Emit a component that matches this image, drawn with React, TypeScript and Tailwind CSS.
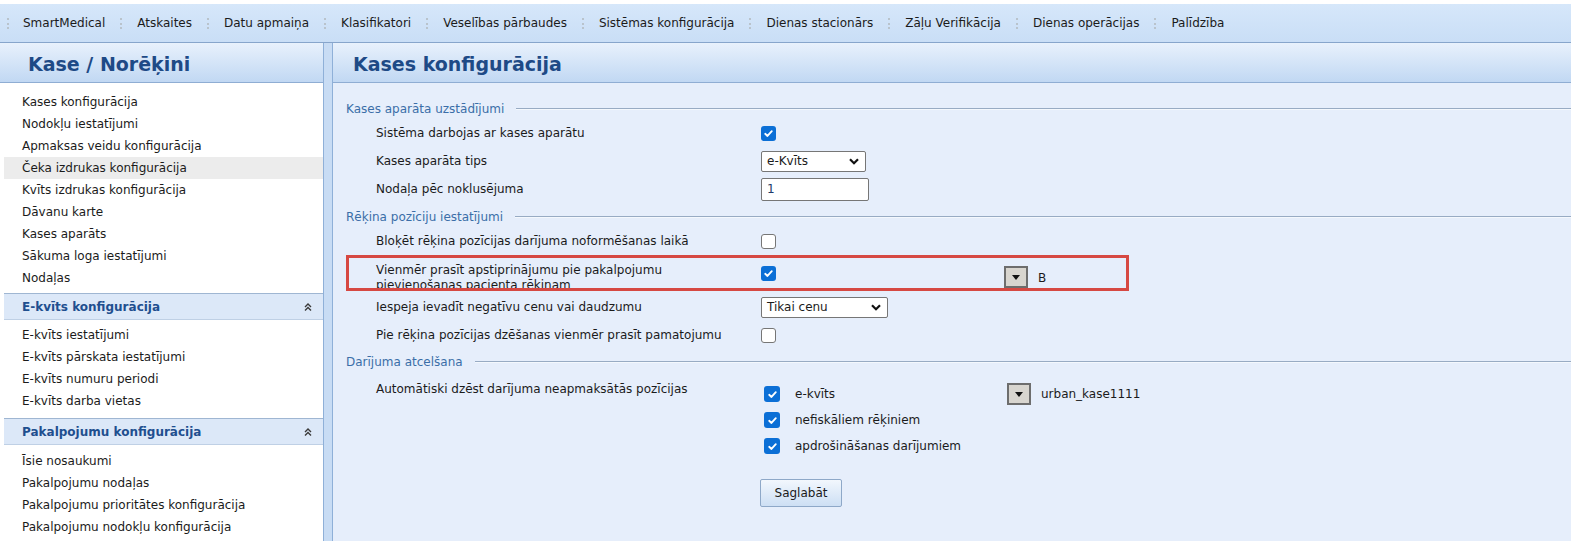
import React from 'react';

const navItems = [
  'SmartMedical',
  'Atskaites',
  'Datu apmaiņa',
  'Klasifikatori',
  'Veselības pārbaudes',
  'Sistēmas konfigurācija',
  'Dienas stacionārs',
  'Zāļu Verifikācija',
  'Dienas operācijas',
  'Palīdzība',
];

const kaseItems = [
  'Kases konfigurācija',
  'Nodokļu iestatījumi',
  'Apmaksas veidu konfigurācija',
  'Čeka izdrukas konfigurācija',
  'Kvīts izdrukas konfigurācija',
  'Dāvanu karte',
  'Kases aparāts',
  'Sākuma loga iestatījumi',
  'Nodaļas',
];

const ekvitsItems = ['E-kvīts iestatījumi', 'E-kvīts pārskata iestatījumi', 'E-kvīts numuru periodi', 'E-kvīts darba vietas'];

const pakalpItems = [
  'Īsie nosaukumi',
  'Pakalpojumu nodaļas',
  'Pakalpojumu prioritātes konfigurācija',
  'Pakalpojumu nodokļu konfigurācija',
];

function Separator() {
  return <span className="mx-[15px] h-[11px] border-l-[2px] border-dotted border-[#b9c3cc]" />;
}

function Checkbox({ checked, size = 'h-[15px] w-[15px]' }: { checked: boolean; size?: string }) {
  if (!checked) {
    return <span className={`block ${size} rounded-[3px] border border-[#767676] bg-white`} />;
  }
  return (
    <span className={`flex ${size} items-center justify-center rounded-[3px] bg-[#0b6fd6]`}>
      <svg viewBox="0 0 12 12" className="h-[11px] w-[11px]">
        <path d="M2.4 6.3 L4.9 8.7 L9.6 3.4" fill="none" stroke="white" strokeWidth="2" strokeLinecap="round" strokeLinejoin="round" />
      </svg>
    </span>
  );
}

function Select({ value, width }: { value: string; width: string }) {
  return (
    <div className={`flex h-[21px] ${width} items-center justify-between rounded-[2px] border border-[#767676] bg-white pl-[5px] pr-[6px]`}>
      <span>{value}</span>
      <svg viewBox="0 0 10 7" className="h-[7px] w-[10px]">
        <path d="M1 1.2 L5 5.2 L9 1.2" fill="none" stroke="#111" strokeWidth="2.2" />
      </svg>
    </div>
  );
}

function DropButton() {
  return (
    <span className="flex h-[22px] w-[24px] items-center justify-center border-2 border-[#6d6d6d] bg-[#d8d5cf]">
      <svg viewBox="0 0 8 5" className="h-[5px] w-[8px]">
        <path d="M0 0 H8 L4 5 Z" fill="#111" />
      </svg>
    </span>
  );
}

function DoubleUp() {
  return (
    <svg viewBox="0 0 10 10" className="h-[10px] w-[10px]">
      <path d="M2 5 L5 2 L8 5 M2 8.5 L5 5.5 L8 8.5" fill="none" stroke="#3a3a3a" strokeWidth="1.4" />
    </svg>
  );
}

function Legend({ title }: { title: string }) {
  return (
    <div className="flex h-[20px] items-center">
      <span className="text-[#3b6ea8]">{title}</span>
      <div className="ml-[12px] flex-1 border-t border-b border-t-[#98abc3] border-b-[#f4f8fd]" />
    </div>
  );
}

function Row({ label, control, extra, h = 'h-[28px]' }: { label: string; control?: React.ReactNode; extra?: React.ReactNode; h?: string }) {
  return (
    <div className={`flex ${h} items-center`}>
      <div className="w-[415px] pl-[30px]">{label}</div>
      <div className="w-[243px]">{control}</div>
      <div>{extra}</div>
    </div>
  );
}

function SectionHeader({ title }: { title: string }) {
  return (
    <div className="flex h-[27px] items-center justify-between border-t border-b border-t-[#9fb6d2] border-b-[#bfd0e5] bg-[#dce8f8] pl-[18px] pr-[10px]">
      <span className="text-[12px] font-bold text-[#1f4f8f]">{title}</span>
      <DoubleUp />
    </div>
  );
}

function MenuList({ items, active }: { items: string[]; active?: string }) {
  return (
    <div className="flex flex-col">
      {items.map((item) => (
        <div key={item} className={`flex h-[22px] items-center pl-[18px] ${item === active ? 'bg-[#ececec]' : ''}`}>
          {item}
        </div>
      ))}
    </div>
  );
}

export default function App() {
  return (
    <div className="flex h-[541px] w-[1571px] flex-col overflow-hidden bg-white pt-[4px] font-['DejaVu_Sans',sans-serif] text-[12px] text-[#1b1b1b]">
      <div className="flex h-[39px] shrink-0 items-center border-b border-[#87a5cb] bg-gradient-to-b from-[#d6e7fa] to-[#c9def6] pl-0 text-[12px]">
        {navItems.map((item, i) => (
          <React.Fragment key={item}>
            {i === 0 ? <span className="ml-[7px] mr-[14px] h-[11px] border-l-[2px] border-dotted border-[#b9c3cc]" /> : <Separator />}
            <span>{item}</span>
          </React.Fragment>
        ))}
      </div>

      <div className="flex min-h-0 flex-1">
        <div className="flex w-[323px] shrink-0 flex-col">
          <div className="flex h-[40px] shrink-0 items-center border-b border-[#8fadd3] bg-gradient-to-b from-[#e8f1fc] to-[#c1d8f3] pl-[28px] pt-[3px] text-[19px] font-bold text-[#1e4a86]">
            Kase / Norēķini
          </div>
          <div className="flex flex-col pl-[4px] pt-[8px]">
            <MenuList items={kaseItems} active="Čeka izdrukas konfigurācija" />
            <div className="mt-[4px]">
              <SectionHeader title="E-kvīts konfigurācija" />
            </div>
            <div className="pt-[4px] pb-[6px]">
              <MenuList items={ekvitsItems} />
            </div>
            <SectionHeader title="Pakalpojumu konfigurācija" />
            <div className="pt-[5px]">
              <MenuList items={pakalpItems} />
            </div>
          </div>
        </div>

        <div className="w-[10px] shrink-0 border-x border-[#8fb0d8] bg-[#c8dcf4]" />

        <div className="flex min-w-0 flex-1 flex-col bg-[#e6eefb]">
          <div className="flex h-[40px] shrink-0 items-center border-b border-[#8fadd3] bg-gradient-to-b from-[#e8f1fc] to-[#c1d8f3] pl-[20px] pt-[3px] text-[19px] font-bold text-[#1e4a86]">
            Kases konfigurācija
          </div>

          <div className="flex flex-col pl-[13px] pt-[16px]">
            <Legend title="Kases aparāta uzstādījumi" />
            <Row label="Sistēma darbojas ar kases aparātu" control={<Checkbox checked />} />
            <Row label="Kases aparāta tips" control={<Select value="e-Kvīts" width="w-[105px]" />} />
            <Row
              label="Nodaļa pēc noklusējuma"
              control={
                <div className="flex h-[23px] w-[108px] items-center rounded-[2px] border border-[#767676] bg-white pl-[5px] text-[#1e3a6a]">1</div>
              }
            />

            <div className="mt-[4px]">
              <Legend title="Rēķina pozīciju iestatījumi" />
            </div>
            <Row label="Bloķēt rēķina pozīcijas darījuma noformēšanas laikā" control={<Checkbox checked={false} />} />

            <div className="relative flex h-[36px] overflow-hidden">
              <div className="w-[415px] pl-[30px] pt-[8px] leading-[15px]">
                Vienmēr prasīt apstiprinājumu pie pakalpojumu
                <br />
                pievienošanas pacienta rēķinam
              </div>
              <div className="w-[243px] pt-[11px]">
                <Checkbox checked />
              </div>
              <div className="flex items-start gap-[10px] pt-[11px]">
                <DropButton />
                <span className="pt-[3px]">B</span>
              </div>
              <div className="absolute left-0 top-0 h-[36px] w-[783px] border-[3px] border-[#d64842]" />
            </div>

            <Row label="Iespeja ievadīt negatīvu cenu vai daudzumu" h="h-[32px]" control={<Select value="Tikai cenu" width="w-[127px]" />} />
            <Row label="Pie rēķina pozīcijas dzēšanas vienmēr prasīt pamatojumu" h="h-[24px]" control={<Checkbox checked={false} />} />

            <div className="mt-[5px]">
              <Legend title="Darījuma atcelšana" />
            </div>
            <div className="flex">
              <div className="w-[415px] pl-[30px] pt-[8px]">Automātiski dzēst darījuma neapmaksātās pozīcijas</div>
              <div className="flex w-[243px] flex-col pt-[9px]">
                {['e-kvīts', 'nefiskāliem rēķiniem', 'apdrošināšanas darījumiem'].map((t) => (
                  <div key={t} className="flex h-[26px] items-center gap-[15px] pl-[3px]">
                    <Checkbox checked size="h-[16px] w-[16px]" />
                    <span>{t}</span>
                  </div>
                ))}
              </div>
              <div className="flex h-[26px] items-center gap-[10px] pl-[3px] pt-[9px] box-content">
                <DropButton />
                <span>urban_kase1111</span>
              </div>
            </div>

            <div className="pl-[414px] pt-[20px]">
              <button className="h-[28px] w-[82px] rounded-[2px] border border-[#8ea8c8] bg-gradient-to-b from-[#f2f7fd] to-[#cddff4] text-[12px] text-[#1b1b1b]">
                Saglabāt
              </button>
            </div>
          </div>
        </div>
      </div>
    </div>
  );
}
